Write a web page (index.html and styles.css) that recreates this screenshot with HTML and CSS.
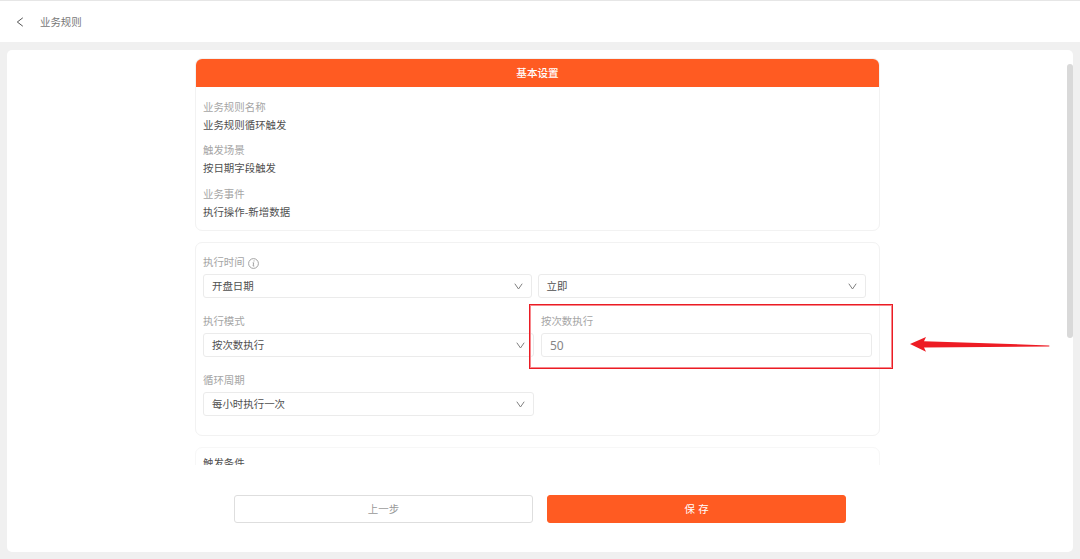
FILE: index.html
```
<!DOCTYPE html>
<html lang="zh-CN">
<head>
    <meta charset="UTF-8">
    <title>业务规则</title>
    <link rel="stylesheet" href="styles.css">
</head>
<body>
    <header class="header">
        <svg class="back" viewBox="0 0 8 10"><path d="M6.8 0.8L1.3 5l5.5 4.2"/></svg>
        <span>业务规则</span>
    </header>

    <main class="panel">
        <div class="scroll">
            <section class="card">
                <h2 class="card-title">基本设置</h2>
                <dl class="info">
                    <dt>业务规则名称</dt>
                    <dd>业务规则循环触发</dd>
                    <dt>触发场景</dt>
                    <dd>按日期字段触发</dd>
                    <dt>业务事件</dt>
                    <dd>执行操作-新增数据</dd>
                </dl>
            </section>

            <section class="card form">
                <div class="field">
                    <div class="label">执行时间
                        <svg class="tip" viewBox="0 0 11 11"><circle cx="5.5" cy="5.5" r="4.9"/><path d="M6 2.4v1.1M4.7 4.8h1l-.6 3.2h1.2"/></svg>
                    </div>
                    <div class="row">
                        <div class="select">开盘日期<svg class="arrow" viewBox="0 0 9 7"><path d="M0.8 0.7L4.5 6l3.7-5.3"/></svg></div>
                        <div class="select">立即<svg class="arrow" viewBox="0 0 9 7"><path d="M0.8 0.7L4.5 6l3.7-5.3"/></svg></div>
                    </div>
                </div>
                <div class="row wide">
                    <div class="field">
                        <div class="label">执行模式</div>
                        <div class="select">按次数执行<svg class="arrow" viewBox="0 0 9 7"><path d="M0.8 0.7L4.5 6l3.7-5.3"/></svg></div>
                    </div>
                    <div class="field marked">
                        <label class="label" for="times">按次数执行</label>
                        <input class="input" type="text" id="times" value="50">
                        <div class="mark"></div>
                        <svg class="pointer" viewBox="0 0 142 18"><path d="M1 8.1L17 1l-2 4.2L140 9.4q1 .6 0 1.2L15 11.4l2 4.4z"/></svg>
                    </div>
                </div>
                <div class="row wide">
                    <div class="field">
                        <div class="label">循环周期</div>
                        <div class="select">每小时执行一次<svg class="arrow" viewBox="0 0 9 7"><path d="M0.8 0.7L4.5 6l3.7-5.3"/></svg></div>
                    </div>
                    <div class="field"></div>
                </div>
            </section>

            <section class="card condition">触发条件</section>
        </div>
        <div class="thumb"></div>

        <footer class="footer">
            <button class="btn" type="button">上一步</button>
            <button class="btn primary" type="button">保 存</button>
        </footer>
    </main>
</body>
</html>
```

FILE: styles.css
```
* {
    box-sizing: border-box;
}
body {
    display: flex;
    flex-direction: column;
    height: 559px;
    margin: 0;
    overflow: hidden;
    background: #f0f0f0;
    color: #505050;
    font-family: "Noto Sans CJK SC", sans-serif;
    font-size: 10.45px;
    line-height: 18px;
}
svg {
    fill: none;
    stroke: #808080;
    stroke-width: 1;
}
.header {
    display: flex;
    align-items: center;
    gap: 16px;
    height: 42px;
    padding-left: 16px;
    border-top: 1px solid #e6e6e6;
    background: #fff;
    color: #777;
}
.back {
    width: 8px;
    height: 10px;
    stroke: #555;
}
.panel {
    position: relative;
    display: flex;
    flex-direction: column;
    height: 502px;
    margin: 8px 7px 7px;
    border-radius: 5px;
    background: #fff;
}
.scroll {
    display: flex;
    flex-direction: column;
    gap: 11px;
    height: 415px;
    padding: 8px 0 0 188px;
    overflow: hidden;
}
.thumb {
    position: absolute;
    top: 14px;
    right: 0;
    width: 6px;
    height: 274px;
    border-radius: 3px;
    background: #d9d9d9;
}

/* cards */
.card {
    flex: none;
    width: 685px;
    border: 1px solid #f2f2f2;
    border-radius: 7px;
}
.card-title {
    height: 28px;
    margin: 0;
    border-radius: 6px 6px 0 0;
    background: #ff5b22;
    color: #fff;
    font-size: 10.6px;
    font-weight: 500;
    line-height: 28px;
    text-align: center;
}
.info {
    height: 143px;
    margin: 0;
    padding: 11px 7px 0;
}
.info dt {
    color: #a5a5a5;
}
.info dd {
    margin: 0 0 7.3px;
}
.form {
    display: flex;
    flex-direction: column;
    gap: 14px;
    height: 194px;
    padding: 10px 7px 0;
}
.condition {
    height: 80px;
    padding: 6px 7px;
    border-color: #f7f7f7;
}

/* form */
.row {
    display: flex;
    gap: 6px;
    padding-right: 6px;
}
.wide {
    gap: 7px;
    padding-right: 0;
}
.row > * {
    flex: 1;
}
.label {
    display: flex;
    align-items: center;
    gap: 3px;
    height: 21px;
    padding-bottom: 3px;
    color: #a5a5a5;
}
.tip {
    width: 11px;
    height: 11px;
    margin-top: 2px;
    stroke: #999;
    stroke-width: 0.9;
}
.select,
.input {
    display: flex;
    align-items: center;
    justify-content: space-between;
    width: 100%;
    height: 24px;
    padding: 0 8px;
    border: 1px solid #ebebeb;
    border-radius: 3px;
    background: #fff;
}
.input {
    color: #858585;
    font: 12px "Noto Sans", sans-serif;
    outline: none;
}
.arrow {
    width: 9px;
    height: 7px;
}

/* red frame and arrow over the count field */
.marked {
    position: relative;
}
.mark {
    position: absolute;
    top: -8px;
    left: -12px;
    width: 364px;
    height: 65px;
    border: 1px solid #ea1c24;
    box-shadow: inset 0 0 0 1px #f7878c;
}
.pointer {
    position: absolute;
    top: 24px;
    left: 368px;
    width: 142px;
    height: 18px;
    fill: #ed1c24;
    stroke: none;
}

/* bottom buttons */
.footer {
    display: flex;
    justify-content: center;
    gap: 14px;
    padding-top: 30px;
}
.btn {
    width: 299px;
    height: 28px;
    padding: 0;
    border: 1px solid #dedede;
    border-radius: 3px;
    background: #fff;
    color: #999;
    font: inherit;
}
.primary {
    border-color: #ff5b22;
    background: #ff5b22;
    color: #fff;
    font-weight: 400;
    word-spacing: 1px;
}
```
